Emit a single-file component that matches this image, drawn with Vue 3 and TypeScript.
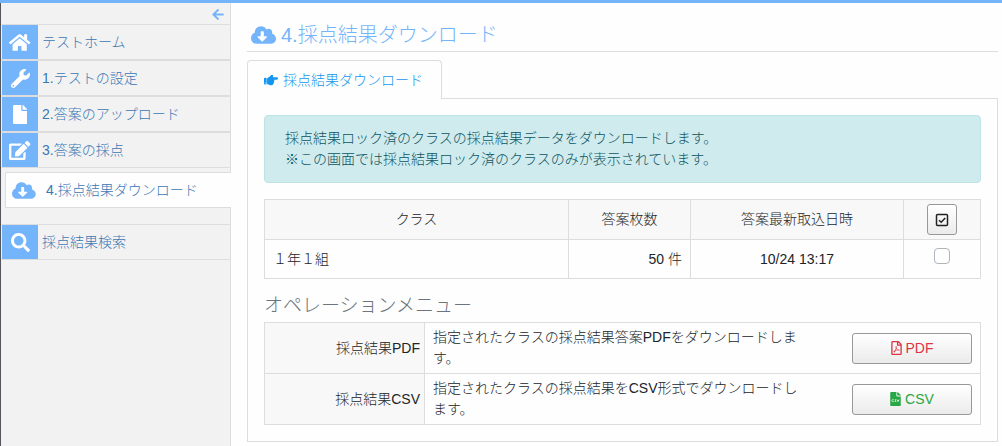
<script setup lang="ts">
import { computed, ref } from 'vue'

interface Icon {
  w: number
  d: string
}

interface MenuItem {
  label: string
  icon: Icon
  active?: boolean
  separate?: boolean
}

interface ClassRow {
  name: string
  count: number
  imported: string
  checked: boolean
}

const icons: Record<string, Icon> = {
  back: { w: 448, d: 'M257.5 445.1l-22.2 22.2c-9.4 9.4-24.6 9.4-33.9 0L7 273c-9.4-9.4-9.4-24.6 0-33.9L201.4 44.7c9.4-9.4 24.6-9.4 33.9 0l22.2 22.2c9.5 9.5 9.3 25-.4 34.3L136.6 216H424c13.3 0 24 10.7 24 24v32c0 13.3-10.7 24-24 24H136.6l120.5 114.8c9.8 9.3 10 24.8.4 34.3z' },
  home: { w: 576, d: 'M280.37 148.26L96 300.11V464a16 16 0 0 0 16 16l112.06-.29a16 16 0 0 0 15.92-16V368a16 16 0 0 1 16-16h64a16 16 0 0 1 16 16v95.64a16 16 0 0 0 16 16.05L464 480a16 16 0 0 0 16-16V300L295.67 148.26a12.19 12.19 0 0 0-15.3 0zM571.6 251.47L488 182.56V44.05a12 12 0 0 0-12-12h-56a12 12 0 0 0-12 12v72.61L318.47 43a48 48 0 0 0-61 0L4.34 251.47a12 12 0 0 0-1.6 16.9l25.5 31A12 12 0 0 0 45.15 301l235.22-193.74a12.19 12.19 0 0 1 15.3 0L530.9 301a12 12 0 0 0 16.9-1.6l25.5-31a12 12 0 0 0-1.7-16.93z' },
  wrench: { w: 512, d: 'M507.73 109.1c-2.24-9.03-13.54-12.09-20.12-5.51l-74.36 74.36-67.88-11.31-11.31-67.88 74.36-74.36c6.62-6.62 3.43-17.9-5.66-20.16-47.38-11.74-99.55.91-136.58 37.93-39.64 39.64-50.55 97.1-34.05 147.2L18.74 402.76c-24.99 24.99-24.99 65.51 0 90.5 24.99 24.99 65.51 24.99 90.5 0l213.21-213.21c50.12 16.71 107.47 5.68 147.37-34.22 37.07-37.07 49.7-89.32 37.91-136.73zM64 472c-13.25 0-24-10.75-24-24 0-13.26 10.75-24 24-24s24 10.74 24 24c0 13.25-10.75 24-24 24z' },
  file: { w: 384, d: 'M224 136V0H24C10.7 0 0 10.7 0 24v464c0 13.3 10.7 24 24 24h336c13.3 0 24-10.7 24-24V160H248c-13.2 0-24-10.8-24-24zm160-14.1v6.1H256V0h6.1c6.4 0 12.5 2.5 17 7l97.9 98c4.5 4.5 7 10.6 7 16.9z' },
  edit: { w: 576, d: 'M402.6 83.2l90.2 90.2c3.8 3.8 3.8 10 0 13.8L274.4 405.6l-92.8 10.3c-12.4 1.4-22.9-9.1-21.5-21.5l10.3-92.8L388.8 83.2c3.8-3.8 10-3.8 13.8 0zm162-22.9l-48.8-48.8c-15.2-15.2-39.9-15.2-55.2 0l-35.4 35.4c-3.8 3.8-3.8 10 0 13.8l90.2 90.2c3.8 3.8 10 3.8 13.8 0l35.4-35.4c15.2-15.3 15.2-40 0-55.2zM384 346.2V448H64V128h229.8c3.2 0 6.2-1.3 8.5-3.5l40-40c7.6-7.6 2.2-20.5-8.5-20.5H48C21.5 64 0 85.5 0 112v352c0 26.5 21.5 48 48 48h352c26.5 0 48-21.5 48-48V306.2c0-10.7-12.9-16-20.5-8.5l-40 40c-2.2 2.3-3.5 5.3-3.5 8.5z' },
  cloud: { w: 640, d: 'M537.6 226.6c4.1-10.7 6.4-22.4 6.4-34.6 0-53-43-96-96-96-19.7 0-38.1 6-53.3 16.2C367 64.2 315.3 32 256 32c-88.4 0-160 71.6-160 160 0 2.7.1 5.4.2 8.1C40.2 219.8 0 273.2 0 336c0 79.5 64.5 144 144 144h368c70.7 0 128-57.3 128-128 0-61.9-44-113.6-102.4-125.4zm-132.9 88.7L299.3 420.7c-6.2 6.2-16.4 6.2-22.6 0L171.3 315.3c-10.1-10.1-2.9-27.3 11.3-27.3H248V176c0-8.8 7.2-16 16-16h48c8.8 0 16 7.2 16 16v112h65.4c14.2 0 21.4 17.2 11.3 27.3z' },
  search: { w: 512, d: 'M505 442.7L405.3 343c-4.5-4.5-10.6-7-17-7H372c27.6-35.3 44-79.7 44-128C416 93.1 322.9 0 208 0S0 93.1 0 208s93.1 208 208 208c48.3 0 92.7-16.4 128-44v16.3c0 6.4 2.5 12.5 7 17l99.7 99.7c9.4 9.4 24.6 9.4 33.9 0l28.3-28.3c9.4-9.4 9.4-24.6.1-34zM208 336c-70.7 0-128-57.2-128-128 0-70.7 57.2-128 128-128 70.7 0 128 57.2 128 128 0 70.7-57.2 128-128 128z' },
  hand: { w: 512, d: 'M512 199.652c0 23.625-20.65 43.826-44.8 43.826h-99.851c16.34 17.048 18.346 49.766-6.299 70.944 14.288 22.829 2.147 53.017-16.45 62.315C353.574 425.878 322.654 448 272 448c-2.746 0-13.276-.203-16-.195-61.971.168-76.894-31.065-123.731-38.315C120.596 407.683 112 397.599 112 385.786V214.261l.002-.001c.011-18.366 10.607-35.889 28.464-43.845 28.886-12.994 95.413-49.038 107.534-77.323 7.797-18.194 21.384-29.084 40-29.092 34.222-.014 57.752 35.098 44.119 66.908-3.583 8.359-8.312 16.67-14.153 24.918H467.2c23.45 0 44.8 20.543 44.8 43.826zM96 200v192c0 13.255-10.745 24-24 24H24c-13.255 0-24-10.745-24-24V200c0-13.255 10.745-24 24-24h48c13.255 0 24 10.745 24 24zM68 368c0-11.046-8.954-20-20-20s-20 8.954-20 20 8.954 20 20 20 20-8.954 20-20z' },
  pdf: { w: 384, d: 'M369.9 97.9L286 14C277 5 264.8-.1 252.1-.1H48C21.5 0 0 21.5 0 48v416c0 26.5 21.5 48 48 48h288c26.5 0 48-21.5 48-48V131.9c0-12.7-5.1-25-14.1-34zM332.1 128H256V51.9l76.1 76.1zM48 464V48h160v104c0 13.3 10.7 24 24 24h104v288H48zm250.2-143.7c-12.2-12-47-8.7-64.4-6.5-17.2-10.5-28.7-25-36.8-46.3 3.9-16.1 10.1-40.6 5.4-56-4.2-26.2-37.8-23.6-42.6-5.9-4.4 16.1-.4 38.5 7 67.1-10 23.9-24.9 56-35.4 74.4-20 10.3-47 26.2-51 46.2-3.3 15.8 26 55.2 76.1-31.2 22.4-7.4 46.8-16.5 68.4-20.1 18.9 10.2 41 17 55.8 17 25.5 0 28-28.2 17.5-38.7zm-198.1 77.8c5.1-13.7 24.5-29.5 30.4-35-19 30.3-30.4 35.7-30.4 35zm81.6-190.6c7.4 0 6.7 32.1 1.8 40.8-4.4-13.9-4.3-40.8-1.8-40.8zm-24.4 136.6c9.7-16.9 18-37 24.7-54.7 8.3 15.1 18.9 27.2 30.1 35.5-20.8 4.3-38.9 13.1-54.8 19.2zm131.6-5s-5 6-37.3-7.8c35.1-2.6 40.9 5.4 37.3 7.8z' },
}

const menu: MenuItem[] = [
  { label: 'テストホーム', icon: icons.home },
  { label: '1.テストの設定', icon: icons.wrench },
  { label: '2.答案のアップロード', icon: icons.file },
  { label: '3.答案の採点', icon: icons.edit },
  { label: '4.採点結果ダウンロード', icon: icons.cloud, active: true },
  { label: '採点結果検索', icon: icons.search, separate: true },
]

const rows = ref<ClassRow[]>([
  { name: '１年１組', count: 50, imported: '10/24 13:17', checked: false },
])

const allChecked = computed(() => rows.value.every((row) => row.checked))

function toggleAll(): void {
  const next = !allChecked.value
  rows.value.forEach((row) => (row.checked = next))
}
</script>

<template>
  <div class="page">
    <aside class="sidebar">
      <button class="collapse" type="button" aria-label="メニューを閉じる">
        <svg class="icon-back" :viewBox="`0 0 ${icons.back.w} 512`" aria-hidden="true"><path :d="icons.back.d" /></svg>
      </button>
      <nav class="menu">
        <a
          v-for="item in menu"
          :key="item.label"
          href="#"
          class="menu-item"
          :class="{ active: item.active, separate: item.separate }"
          :aria-current="item.active ? 'page' : undefined"
        >
          <span class="menu-icon">
            <svg :viewBox="`0 0 ${item.icon.w} 512`" aria-hidden="true"><path :d="item.icon.d" /></svg>
          </span>
          <span class="menu-label">{{ item.label }}</span>
        </a>
      </nav>
    </aside>

    <main class="main">
      <h1 class="title">
        <svg class="icon-title" :viewBox="`0 0 ${icons.cloud.w} 512`" aria-hidden="true"><path :d="icons.cloud.d" /></svg>
        <span>4.採点結果ダウンロード</span>
      </h1>

      <div class="tabs">
        <a href="#" class="tab">
          <svg class="icon-tab" :viewBox="`0 0 ${icons.hand.w} 512`" aria-hidden="true"><path :d="icons.hand.d" /></svg>
          <span>採点結果ダウンロード</span>
        </a>
      </div>

      <section class="panel">
        <p class="notice">
          採点結果ロック済のクラスの採点結果データをダウンロードします。<br />
          ※この画面では採点結果ロック済のクラスのみが表示されています。
        </p>

        <table class="grid classes">
          <colgroup>
            <col />
            <col class="col-count" />
            <col class="col-date" />
            <col class="col-check" />
          </colgroup>
          <thead>
            <tr>
              <th scope="col">クラス</th>
              <th scope="col">答案枚数</th>
              <th scope="col">答案最新取込日時</th>
              <th scope="col">
                <button class="btn check-all" type="button" aria-label="すべて選択" @click="toggleAll">
                  <svg class="icon-check" viewBox="0 0 14 14" aria-hidden="true">
                    <rect x="1.5" y="1.5" width="11" height="11" rx="1" />
                    <path d="M4 7.2l2.2 2.1L10.2 5" />
                  </svg>
                </button>
              </th>
            </tr>
          </thead>
          <tbody>
            <tr v-for="row in rows" :key="row.name">
              <td>{{ row.name }}</td>
              <td class="right">{{ row.count }} 件</td>
              <td class="center">{{ row.imported }}</td>
              <td class="center">
                <input v-model="row.checked" class="tick" type="checkbox" :aria-label="row.name" />
              </td>
            </tr>
          </tbody>
        </table>

        <h2 class="subtitle">オペレーションメニュー</h2>

        <table class="grid operations">
          <tbody>
            <tr>
              <th scope="row">採点結果PDF</th>
              <td>
                <div class="operation">
                  <span>指定されたクラスの採点結果答案PDFをダウンロードします。</span>
                  <button class="btn download pdf" type="button">
                    <svg class="icon-file" :viewBox="`0 0 ${icons.pdf.w} 512`" aria-hidden="true"><path :d="icons.pdf.d" /></svg>
                    <span>PDF</span>
                  </button>
                </div>
              </td>
            </tr>
            <tr>
              <th scope="row">採点結果CSV</th>
              <td>
                <div class="operation">
                  <span>指定されたクラスの採点結果をCSV形式でダウンロードします。</span>
                  <button class="btn download csv" type="button">
                    <svg class="icon-file" :viewBox="`0 0 ${icons.file.w} 512`" aria-hidden="true">
                      <path :d="icons.file.d" />
                      <path
                        class="file-mark"
                        d="M128 284c-44-20-68 4-68 32s24 50 68 32M220 280c-50-14-60 22-24 34s18 48-30 34M252 278l34 74 34-74"
                      />
                    </svg>
                    <span>CSV</span>
                  </button>
                </div>
              </td>
            </tr>
          </tbody>
        </table>
      </section>
    </main>
  </div>
</template>

<style>
body {
  margin: 0;
  background: #fefefe;
}
</style>

<style scoped>
.page {
  box-sizing: border-box;
  display: flex;
  min-height: 100vh;
  border-top: 3px solid #74b4fb;
  font-family: "Liberation Sans", "Noto Sans CJK JP", sans-serif;
  font-size: 14px;
  font-weight: 300;
  line-height: 21px;
  color: #212529;
}

svg {
  flex: none;
  fill: currentColor;
}

a {
  text-decoration: none;
}

.sidebar {
  box-sizing: border-box;
  flex: 0 0 231px;
  border-left: 1px solid #55555c;
  background: linear-gradient(to left, #ddd 1px, #f2f2f2 1px);
}

.collapse {
  display: flex;
  align-items: center;
  justify-content: flex-end;
  width: 100%;
  height: 21px;
  padding: 1px 7px 0 0;
  border: 0;
  background: none;
  color: #74b4fb;
}

.icon-back {
  width: 12px;
  height: 13px;
}

.menu-item {
  box-sizing: border-box;
  display: flex;
  align-items: center;
  height: 36px;
  padding-left: 1px;
  border-top: 1px solid #ddd;
  border-bottom: 1px solid #ddd;
  color: #3a78b5;
}

.menu-icon {
  display: flex;
  align-items: center;
  justify-content: center;
  width: 36px;
  height: 100%;
  background: #74b4fb;
  color: #fff;
}

.menu-icon svg {
  height: 19px;
}

.menu-label {
  padding: 1px 0 0 4px;
}

.menu-item.active {
  margin: 4px 0 0 4px;
  padding-left: 0;
  border-left: 1px solid #ddd;
  background: #fefefe;
}

.active .menu-icon {
  background: none;
  color: #74b4fb;
}

.menu-item.separate {
  margin-top: 16px;
}

.main {
  flex: 1;
  min-width: 0;
  padding: 17px 4px 4px 16px;
}

.title {
  display: flex;
  align-items: center;
  gap: 5px;
  margin: 0 0 8px;
  padding: 0 0 1px 4px;
  border-bottom: 1px solid #ddd;
  font-size: 20px;
  font-weight: 300;
  line-height: 30px;
  color: #74b4fb;
}

.icon-title {
  width: 25px;
  height: 20px;
}

.tabs {
  display: flex;
}

.tab {
  display: flex;
  align-items: center;
  gap: 5px;
  height: 38px;
  margin-bottom: -1px;
  padding: 0 18px 0 16px;
  border: 1px solid #ddd;
  border-bottom: 0;
  border-radius: 4px 4px 0 0;
  background: #fefefe;
  color: #1496ee;
  z-index: 1;
}

.icon-tab {
  width: 14px;
  height: 14px;
}

.panel {
  padding: 16px;
  border: 1px solid #ddd;
}

.notice {
  margin: 0 0 16px;
  padding: 12px 20px;
  border: 1px solid #bee3e6;
  border-radius: 4px;
  background: #d0ebee;
  color: #0c5460;
}

.grid {
  width: 100%;
  border-collapse: collapse;
  table-layout: fixed;
}

.grid th,
.grid td {
  box-sizing: border-box;
  padding: 4px 8px;
  border: 1px solid #ddd;
  font-weight: 300;
}

.grid th {
  background: #f8f8f8;
}

.classes th {
  height: 40px;
}

.classes td {
  height: 39px;
}

.col-count {
  width: 122px;
}

.col-date {
  width: 213px;
}

.col-check {
  width: 77px;
}

.right {
  text-align: right;
}

.center {
  text-align: center;
}

.btn {
  display: inline-flex;
  align-items: center;
  justify-content: center;
  padding: 0;
  border: 1px solid #999;
  border-radius: 3px;
  background: linear-gradient(#fff, #ebebeb);
  font: inherit;
}

.check-all {
  width: 30px;
  height: 31px;
  color: #222;
  vertical-align: middle;
}

.icon-check {
  width: 14px;
  height: 14px;
  fill: none;
  stroke: currentColor;
  stroke-width: 1.5;
}

.tick {
  appearance: none;
  box-sizing: border-box;
  width: 16px;
  height: 16px;
  margin: 0;
  border: 1px solid #adb5bd;
  border-radius: 4px;
  background: #fff;
}

.tick:checked {
  background: #74b4fb;
}

.subtitle {
  margin: 12px 0 2px;
  font-size: 19px;
  font-weight: 300;
  line-height: 29px;
  color: #6c757d;
}

.operations th {
  width: 160px;
  padding-right: 4px;
  text-align: right;
}

.operation {
  display: grid;
  grid-template-columns: 69% 120px;
  align-items: center;
  justify-content: space-between;
}

.download {
  gap: 4px;
  height: 31px;
}

.icon-file {
  width: 11px;
  height: 14px;
}

.file-mark {
  fill: none;
  stroke: #f4f4f4;
  stroke-width: 30;
}

.pdf {
  color: #dc3545;
}

.csv {
  color: #28a745;
}
</style>
